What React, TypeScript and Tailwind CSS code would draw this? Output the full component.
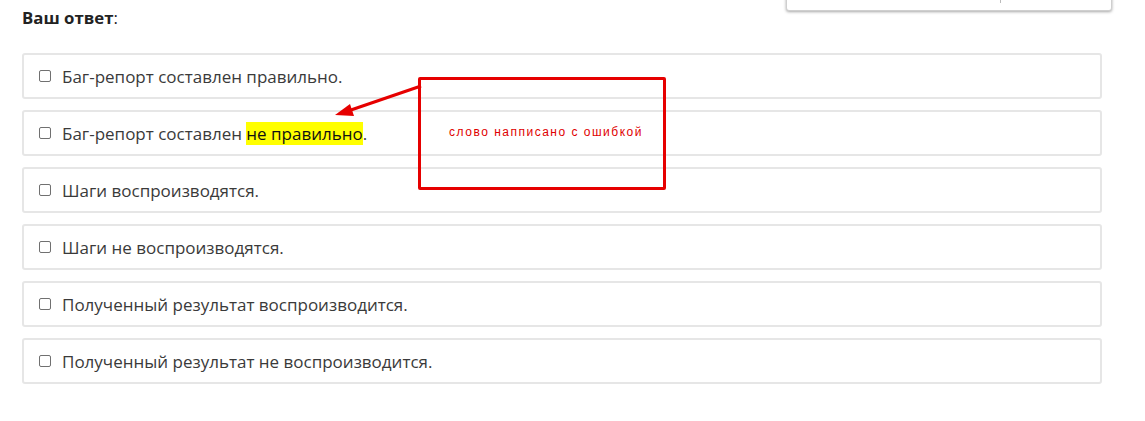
import React from 'react';

const options = [
  { id: 1, text: 'Баг-репорт составлен правильно.' },
  { id: 2, text: 'Баг-репорт составлен ', mark: 'не правильно', tail: '.' },
  { id: 3, text: 'Шаги воспроизводятся.' },
  { id: 4, text: 'Шаги не воспроизводятся.' },
  { id: 5, text: 'Полученный результат воспроизводится.' },
  { id: 6, text: 'Полученный результат не воспроизводится.' },
];

const App: React.FC = () => {
  return (
    <div className="relative w-[1145px] h-[421px] overflow-hidden bg-white font-['Open_Sans',sans-serif] text-[#3a3a3a]">
      {/* floating panel cut off at the top */}
      <div className="absolute left-[786px] top-[-20px] w-[326px] h-[31px] bg-white border border-[#cfcfcf] rounded-[3px] shadow-[0_1px_3px_rgba(0,0,0,0.35)]">
        <div className="absolute left-[213px] top-[19px] w-px h-[3px] bg-[#bbb]" />
      </div>

      <div className="pt-[8px] pl-[22px]">
        <div className="text-[16.8px] leading-[20px] text-[#222]">
          <span className="font-bold">Ваш ответ</span>:
        </div>

        <div className="mt-[25px] flex flex-col gap-[11px]">
          {options.map((opt) => (
            <div
              key={opt.id}
              className="w-[1080px] h-[46px] flex items-center border-2 border-[#e6e6e6] rounded-[3px] pl-[15px]"
            >
              <span className="w-[12px] h-[12px] border border-[#707070] rounded-[2px] bg-white shrink-0" />
              <span className="ml-[11px] text-[17px] leading-[23px]">
                {opt.text}
                {opt.mark && <span className="bg-[#ffff00] text-[#111]">{opt.mark}</span>}
                {opt.tail}
              </span>
            </div>
          ))}
        </div>
      </div>

      {/* annotation */}
      <div className="absolute left-[418px] top-[77px] w-[248px] h-[113px] border-[3px] border-[#e60000] rounded-[2px] flex items-center justify-center">
        <span className="font-['Liberation_Sans',Arial,sans-serif] text-[12px] tracking-[1.5px] text-[#e00000] -mt-[4px] ml-[8px]">
          слово напписано с ошибкой
        </span>
      </div>
      <svg className="absolute left-0 top-0" width="1145" height="421" style={{ pointerEvents: 'none' }}>
        <line x1="421" y1="86" x2="348" y2="111" stroke="#e60000" strokeWidth="3" />
        <polygon points="335,115 350,104 354,116" fill="#e60000" />
      </svg>
    </div>
  );
};

export default App;
